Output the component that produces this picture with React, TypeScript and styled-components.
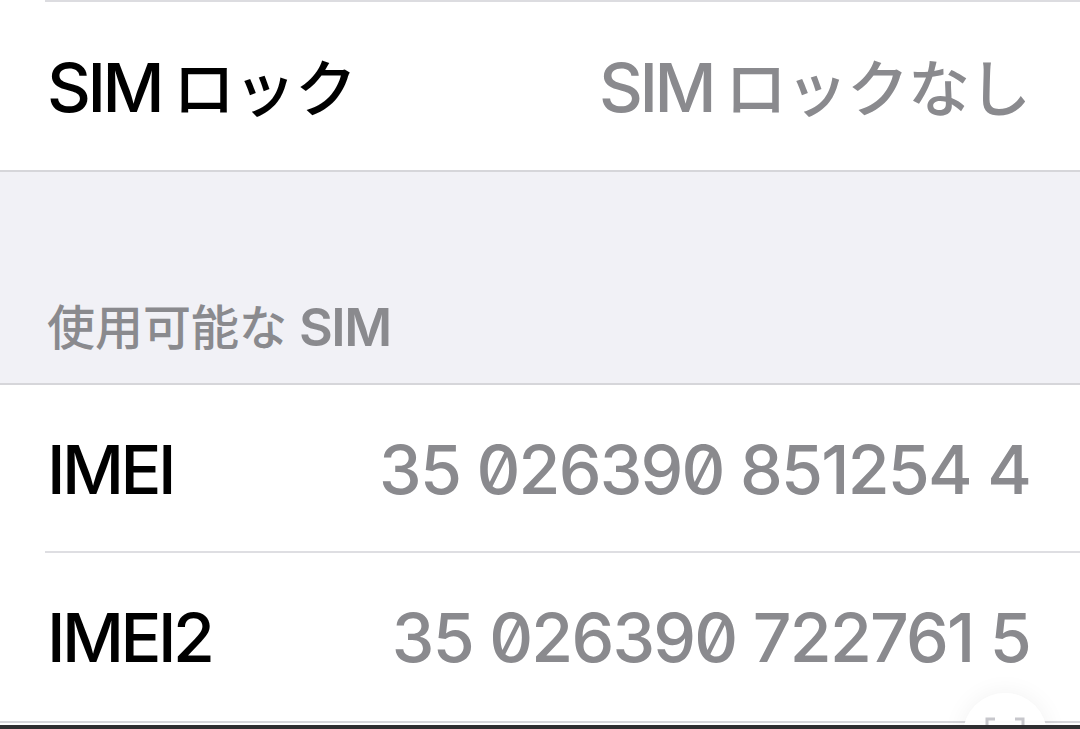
import styled, { createGlobalStyle } from "styled-components";

const GlobalStyle = createGlobalStyle`
	html, body {
		margin: 0;
		padding: 0;
		background: #2e2e30;
	}
	#root {
		height: 729px;
		overflow: hidden;
	}
`;

const Screen = styled.div`
	position: relative;
	display: flex;
	flex-direction: column;
	width: 1080px;
	height: 725px;
	background: #ffffff;
	font-family: Inter, "Noto Sans CJK JP", sans-serif;
	overflow: hidden;
`;

const Group = styled.div`
	display: flex;
	flex-direction: column;
	background: #ffffff;
`;

const Row = styled.div<{ $height: number; $inset?: boolean; $topInset?: boolean }>`
	position: relative;
	display: flex;
	align-items: center;
	justify-content: space-between;
	height: ${(p) => p.$height}px;
	padding: 0 50px 0 47px;
	box-sizing: border-box;

	${(p) =>
		p.$inset &&
		`
		&::after {
			content: "";
			position: absolute;
			left: 45px;
			right: 0;
			bottom: 0;
			height: 2px;
			background: #dedee2;
		}
	`}

	${(p) =>
		p.$topInset &&
		`
		&::before {
			content: "";
			position: absolute;
			left: 45px;
			right: 0;
			top: 0;
			height: 2px;
			background: #dcdce0;
		}
	`}
`;

const Label = styled.span`
	font-size: 68px;
	font-weight: 500;
	color: #000000;
	letter-spacing: -3.5px;
	white-space: pre;
`;

const Value = styled.span<{ $digits?: boolean }>`
	font-size: 68px;
	font-weight: 500;
	color: #8a8a8e;
	letter-spacing: ${(p) => (p.$digits ? "-1.8px" : "-3.5px")};
	font-feature-settings: ${(p) => (p.$digits ? '"zero" 1' : "normal")};
	white-space: pre;
`;

const Kana = styled.span<{ $gap?: number }>`
	font-family: "Noto Sans CJK JP", sans-serif;
	font-size: 62px;
	font-weight: 500;
	letter-spacing: -1px;
	margin-left: ${(p) => p.$gap ?? 0}px;
`;

const SectionHeader = styled.div`
	display: flex;
	align-items: flex-end;
	height: 215px;
	padding: 0 0 24px 47px;
	box-sizing: border-box;
	background: #f1f1f6;
	border-top: 2px solid #d6d6da;
	border-bottom: 2px solid #d6d6da;
	font-size: 52px;
	font-weight: 600;
	color: #8a8a8e;
	letter-spacing: -1.5px;
`;

const HeaderKana = styled.span`
	font-family: "Noto Sans CJK JP", sans-serif;
	font-size: 48px;
	font-weight: 500;
	letter-spacing: 0;
	margin-right: 12px;
`;

const BottomEdge = styled.div`
	height: 2px;
	background: #d6d6da;
`;

const ShotButton = styled.div`
	position: absolute;
	left: 963px;
	top: 693px;
	width: 84px;
	height: 84px;
	border-radius: 50%;
	background: rgba(255, 255, 255, 0.92);
	box-shadow: 0 0 24px rgba(0, 0, 0, 0.06);
	display: flex;
	justify-content: center;
	padding-top: 22px;
	box-sizing: border-box;
`;

const App = () => {
	return (
		<>
			<GlobalStyle />
			<Screen>
				<Group>
					<Row $height={170} $topInset>
						<Label>
							SIM<Kana $gap={12}>ロック</Kana>
						</Label>
						<Value>
							SIM<Kana $gap={12}>ロックなし</Kana>
						</Value>
					</Row>
				</Group>
				<SectionHeader>
					<HeaderKana>使用可能な</HeaderKana>SIM
				</SectionHeader>
				<Group>
					<Row $height={168} $inset>
						<Label>IMEI</Label>
						<Value $digits>35 026390 851254 4</Value>
					</Row>
					<Row $height={168}>
						<Label>IMEI2</Label>
						<Value $digits>35 026390 722761 5</Value>
					</Row>
				</Group>
				<BottomEdge />
				<ShotButton>
					<svg width="40" height="20" viewBox="0 0 40 20" fill="none" stroke="#c7c7cc" strokeWidth="3">
						<path d="M2 18 V4 H10" />
						<path d="M30 4 H38 V18" />
					</svg>
				</ShotButton>
			</Screen>
		</>
	);
};

export default App;
